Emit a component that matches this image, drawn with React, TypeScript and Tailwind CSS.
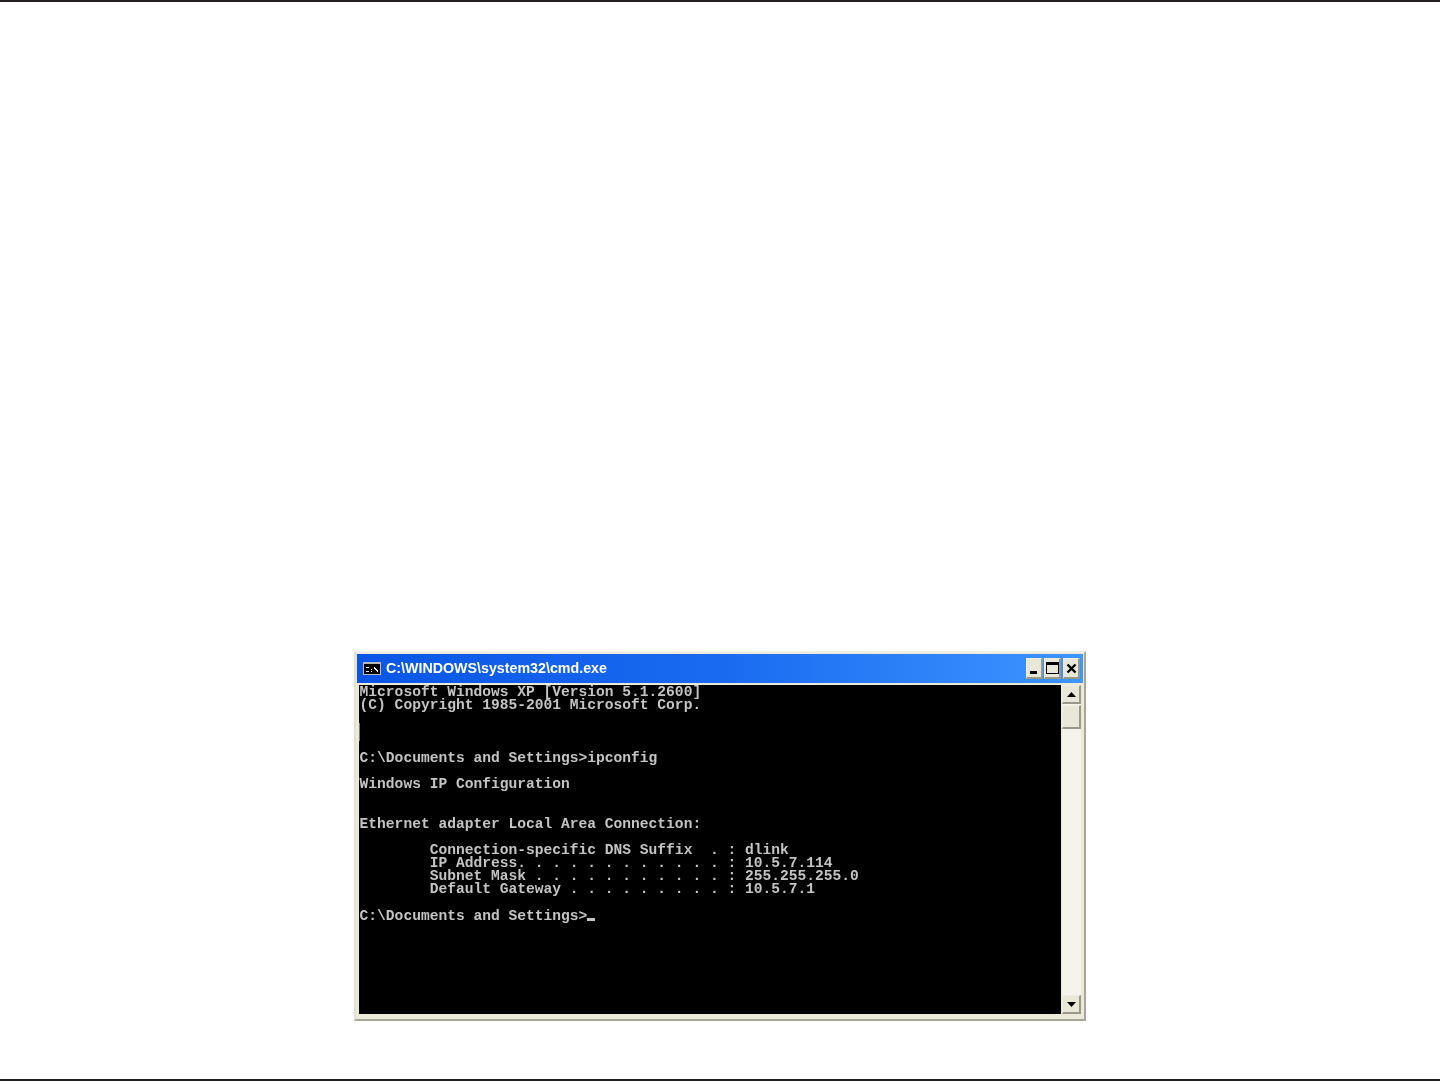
const lines = `Microsoft Windows XP [Version 5.1.2600]
(C) Copyright 1985-2001 Microsoft Corp.



C:\\Documents and Settings>ipconfig

Windows IP Configuration


Ethernet adapter Local Area Connection:

        Connection-specific DNS Suffix  . : dlink
        IP Address. . . . . . . . . . . . : 10.5.7.114
        Subnet Mask . . . . . . . . . . . : 255.255.255.0
        Default Gateway . . . . . . . . . : 10.5.7.1

C:\\Documents and Settings>`;

function CaptionButton({ children, className = "" }: { children: React.ReactNode; className?: string }) {
  return (
    <div className={`flex h-[21px] w-[17px] items-center justify-center border-t border-l border-t-[#f1efe4] border-l-[#f1efe4] border-r-2 border-b-2 border-r-[#9a9889] border-b-[#9a9889] bg-[#e9e7d8] blur-[0.3px] ${className}`}>
      {children}
    </div>
  );
}

function ScrollArrow({ up }: { up?: boolean }) {
  return (
    <div className="flex h-[19px] w-[19px] items-center justify-center border-t border-l border-t-[#f1efe4] border-l-[#f1efe4] border-r-2 border-b-2 border-r-[#9a9889] border-b-[#9a9889] bg-[#e9e7d8]">
      <svg width="9" height="5" viewBox="0 0 9 5">
        <path d={up ? "M4.5 0 L9 5 L0 5 Z" : "M0 0 L9 0 L4.5 5 Z"} fill="#000" />
      </svg>
    </div>
  );
}

export default function App() {
  return (
    <div className="flex h-[1081px] w-[1440px] flex-col justify-between overflow-hidden bg-white">
      <div className="h-[2px] w-full bg-[#231f20]" />
      <div className="flex flex-1 justify-center pt-[649px]">
        <div className="flex h-[370px] w-[732px] flex-col border-2 border-t-[#f1efe4] border-l-[#e3e1d4] border-r-[#a8a699] border-b-[#a8a699] bg-[#ece9d8] p-px">
          <div className="flex h-[29px] shrink-0 items-center bg-gradient-to-r from-[#0a55e6] via-[#1a6af0] to-[#3d95ff] pr-[3px] pl-[6px]">
            <svg width="18" height="13" viewBox="0 0 18 13" className="shrink-0 blur-[0.4px]">
              <rect width="18" height="13" fill="#b8b8b8" />
              <rect x="1" y="2" width="16" height="10" fill="#000" />
              <path d="M3 5h3v1H3v3h3v1H3zM8 7h1v1H8zM8 9h1v1H8zM11 5h1v1h1v1h1v1h1v2h-1V9h-1V8h-1V7h-1z" fill="#eee" />
            </svg>
            <span className="ml-[5px] text-[14.25px] font-bold whitespace-nowrap text-white blur-[0.25px] [font-family:'Liberation_Sans',sans-serif]">
              C:\WINDOWS\system32\cmd.exe
            </span>
            <div className="ml-auto flex items-center">
              <CaptionButton>
                <div className="mt-[9px] mr-[1px] h-[3px] w-[7px] bg-black" />
              </CaptionButton>
              <CaptionButton className="ml-px">
                <div className="h-[12px] w-[13px] border border-t-[3px] border-black" />
              </CaptionButton>
              <CaptionButton className="ml-[2px]">
                <svg width="11" height="11" viewBox="0 0 11 11">
                  <path d="M1.5 1.5 L9.5 9.5 M9.5 1.5 L1.5 9.5" stroke="#000" strokeWidth="2.4" />
                </svg>
              </CaptionButton>
            </div>
          </div>
          <div className="flex flex-1 pt-[2px] pr-[2px] pb-[4px] pl-[2px]">
            <div className="relative flex-1 overflow-hidden bg-black pt-px pl-[0.6px]">
              <div className="absolute top-[38px] left-0 h-[18px] w-px bg-[#777]" />
              <pre className="text-[14.6px] leading-[13.15px] font-bold whitespace-pre text-[#c4c4c4] blur-[0.35px] [font-family:'Liberation_Mono',monospace]">
                {lines}
                <span className="inline-block h-[3px] w-[8px] translate-y-[1px] bg-[#c4c4c4]" />
              </pre>
            </div>
            <div className="ml-px flex w-[19px] shrink-0 flex-col bg-[#f5f4ec]">
              <ScrollArrow up />
              <div className="mt-px h-[24px] w-[19px] border-t border-l border-t-[#f1efe4] border-l-[#f1efe4] border-r-2 border-b-2 border-r-[#9a9889] border-b-[#9a9889] bg-[#e9e7d8]" />
              <div className="flex-1" />
              <ScrollArrow />
            </div>
          </div>
        </div>
      </div>
      <div className="h-[2px] w-full bg-[#231f20]" />
    </div>
  );
}
